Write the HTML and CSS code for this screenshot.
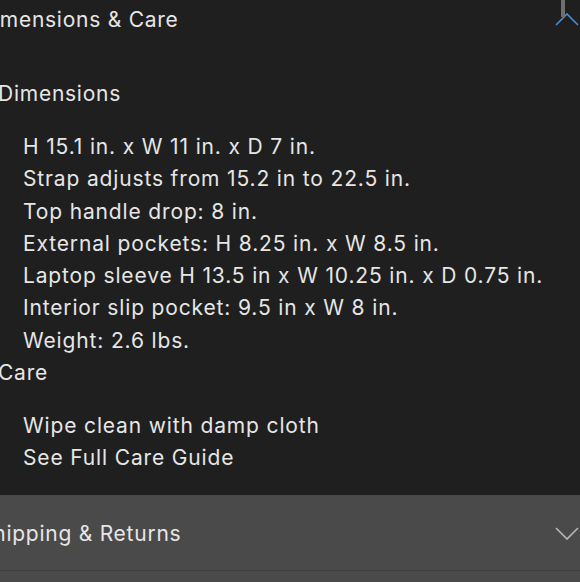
FILE: index.html
```html
<!DOCTYPE html>
<html>
<head>
<meta charset="utf-8">
<link rel="stylesheet" href="styles.css">
</head>
<body>
<div class="accordion">
  <section class="item open">
    <div class="item-head">
      <span class="item-title">Dimensions &amp; Care</span>
      <span class="scroll-thumb"></span>
      <svg class="chev up" width="24" height="13" viewBox="0 0 24 13"><path d="M1 12 L12 1 L23 12" fill="none" stroke="#4a8fd6" stroke-width="1.6"/></svg>
    </div>
    <div class="item-body">
      <h3 class="sub">Dimensions</h3>
      <ul class="list">
        <li>H 15.1 in. x W 11 in. x D 7 in.</li>
        <li>Strap adjusts from 15.2 in to 22.5 in.</li>
        <li>Top handle drop: 8 in.</li>
        <li>External pockets: H 8.25 in. x W 8.5 in.</li>
        <li>Laptop sleeve H 13.5 in x W 10.25 in. x D 0.75 in.</li>
        <li>Interior slip pocket: 9.5 in x W 8 in.</li>
        <li>Weight: 2.6 lbs.</li>
      </ul>
      <h3 class="sub care">Care</h3>
      <ul class="list">
        <li>Wipe clean with damp cloth</li>
        <li>See Full Care Guide</li>
      </ul>
    </div>
  </section>
  <section class="item closed">
    <div class="item-head">
      <span class="item-title">Shipping &amp; Returns</span>
      <svg class="chev down" width="24" height="13" viewBox="0 0 24 13"><path d="M1 1 L12 12 L23 1" fill="none" stroke="#b8b8b8" stroke-width="1.6"/></svg>
    </div>
  </section>
  <section class="item next"></section>
</div>
</body>
</html>
```

FILE: styles.css
```css
html, body {
  margin: 0;
  padding: 0;
  background: #1f1f1f;
  overflow: hidden;
}
body {
  width: 580px;
  height: 582px;
  font-family: "Inter", "Lato", sans-serif;
  color: #e6e6e6;
  font-size: 21px;
}
.accordion {
  display: flex;
  flex-direction: column;
}
.item-head {
  display: flex;
  align-items: center;
  justify-content: space-between;
  position: relative;
}
.open .item-head {
  height: 38px;
}
.item-title {
  margin-left: -22px;
  letter-spacing: 0.75px;
}
.scroll-thumb {
  position: absolute;
  right: 15px;
  top: 0;
  width: 4px;
  height: 17px;
  background: #6e6e6e;
}
.chev {
  margin-right: 1px;
  flex: none;
}
.item-body {
  padding-top: 40px;
  height: 417px;
}
.sub {
  margin: 0 0 0 -2px;
  font-weight: normal;
  font-size: 21px;
  line-height: 32px;
  letter-spacing: 0.75px;
}
.list {
  margin: 21px 0 0 0;
  padding: 0 0 0 23px;
  list-style: none;
}
.list li {
  display: flex;
  align-items: center;
  line-height: 32.3px;
  letter-spacing: 0.85px;
}
.list li::before {
  content: "";
  flex: none;
  width: 6px;
  height: 6px;
  border-radius: 50%;
  background: #e6e6e6;
  margin-left: -29px;
  margin-right: 23px;
}
.closed {
  background: #4a4a4a;
  height: 75px;
  border-bottom: 1px solid #3f3f3f;
}
.closed .item-head {
  height: 77px;
}
.closed .item-title {
  margin-left: -21px;
}
.next {
  background: #4a4a4a;
  height: 20px;
}
```
